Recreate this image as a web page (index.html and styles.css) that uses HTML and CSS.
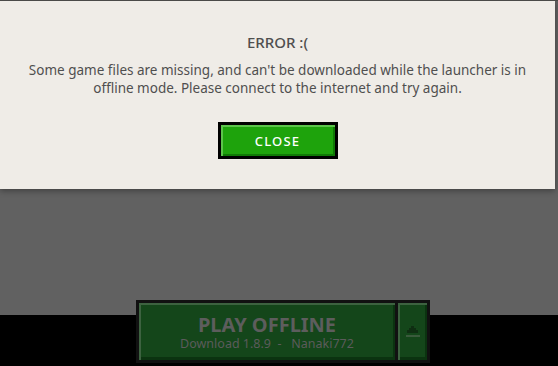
FILE: index.html
```html
<!DOCTYPE html>
<html lang="en">
<head>
  <meta charset="UTF-8" />
  <title>Launcher - Offline</title>
  <link rel="stylesheet" href="styles.css">
</head>
<body>

  <!-- Error dialog over the launcher -->
  <div class="dialog">
    <h2 class="dialog-title">ERROR :(</h2>
    <p class="dialog-text">Some game files are missing, and can't be downloaded while the launcher is in offline mode. Please connect to the internet and try again.</p>
    <button class="close-btn">CLOSE</button>
  </div>

  <div class="spacer"></div>

  <!-- Bottom bar with the (dimmed) play button -->
  <footer class="bottom-bar">
    <div class="play-group">
      <div class="play-btn">
        <span class="play-title">PLAY OFFLINE</span>
        <span class="play-sub">Download 1.8.9&nbsp;&nbsp;-&nbsp;&nbsp;&nbsp;Nanaki772</span>
      </div>
      <div class="play-arrow">
        <svg width="14" height="12" viewBox="0 0 14 12">
          <path d="M5 0h3v2h2v2h2v3H1V4h2V2h2z" fill="#0f2e12"/>
          <rect x="0" y="9" width="14" height="2" fill="#3a5a3c"/>
        </svg>
      </div>
    </div>
  </footer>

</body>
</html>
```

FILE: styles.css
```css
/* Global reset */
* { box-sizing: border-box; }
html, body {
  margin: 0;
  padding: 0;
  height: 100%;
}
body {
  display: flex;
  flex-direction: column;
  background-color: #616161;
  font-family: 'Noto Sans', 'Open Sans', sans-serif;
  border-top: 1px solid #4a4a48;
}

/* Error dialog */
.dialog {
  height: 188px;
  margin-right: 3px;
  background-color: #efece7;
  box-shadow: 0 2px 6px rgba(0, 0, 0, 0.35);
  display: flex;
  flex-direction: column;
  align-items: center;
  padding-top: 30px;
  text-align: center;
}
.dialog-title {
  margin: 0;
  font-size: 15px;
  font-weight: 500;
  color: #4f4f4f;
  line-height: 22px;
}
.dialog-text {
  margin: 8px 0 0;
  width: 500px;
  font-size: 13.5px;
  line-height: 18px;
  color: #4f4f4f;
}

/* Green close button */
.close-btn {
  margin-top: 25px;
  width: 120px;
  height: 37px;
  border: 3px solid #000;
  background-color: #1ea30c;
  box-shadow: inset 2px 2px 0 #5cc44b, inset -2px -2px 0 #0f7a05;
  color: #fff;
  font-family: 'Noto Sans', 'Open Sans', sans-serif;
  font-size: 13px;
  font-weight: 500;
  letter-spacing: 1.2px;
  cursor: pointer;
}

.spacer { flex: 1; }

/* Bottom bar */
.bottom-bar {
  height: 51px;
  background-color: #000;
  display: flex;
  justify-content: center;
}
.play-group {
  margin-top: -15px;
  margin-left: 8px;
  height: 63px;
  display: flex;
  gap: 3px;
  padding: 3px;
  background-color: #111;
}
.play-btn {
  width: 256px;
  display: flex;
  flex-direction: column;
  align-items: center;
  justify-content: center;
  padding-top: 2px;
  background-color: #14461a;
  box-shadow: inset 2px 2px 0 #3d6240, inset -2px -3px 0 #0b3310;
}
.play-title {
  font-size: 20px;
  font-weight: 700;
  line-height: 22px;
  color: #5d5d5d;
}
.play-sub {
  font-size: 12.5px;
  line-height: 16px;
  color: #5b5b5b;
}
.play-arrow {
  width: 29px;
  display: flex;
  align-items: center;
  justify-content: center;
  background-color: #14461a;
  box-shadow: inset 2px 2px 0 #3d6240, inset -2px -3px 0 #0b3310;
}
```
